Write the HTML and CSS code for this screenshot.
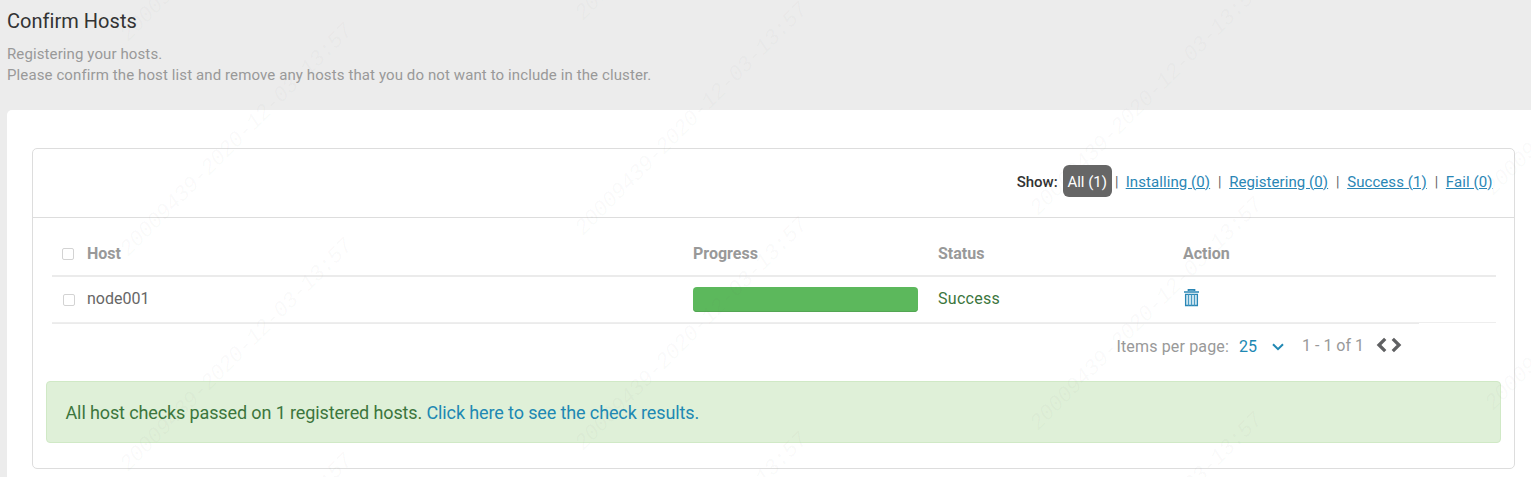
FILE: index.html
```html
<!DOCTYPE html>
<html lang="en">
<head>
<meta charset="utf-8">
<title>Confirm Hosts</title>
<link rel="stylesheet" href="styles.css">
</head>
<body>
<header class="intro">
  <h1 class="title">Confirm Hosts</h1>
  <p class="lead">Registering your hosts.<br>Please confirm the host list and remove any hosts that you do not want to include in the cluster.</p>
</header>
<main class="panel">
  <section class="card">
    <nav class="filters">
      <b class="show">Show:</b><a class="pill">All (1)</a><i class="sep first">|</i><a class="link">Installing (0)</a><i class="sep">|</i><a class="link">Registering (0)</a><i class="sep">|</i><a class="link">Success (1)</a><i class="sep">|</i><a class="link">Fail (0)</a>
    </nav>
    <div class="table">
      <div class="row head">
        <span class="check"></span><span>Host</span><span>Progress</span><span>Status</span><span>Action</span>
      </div>
      <div class="row item">
        <span class="check"></span><span class="host">node001</span><span class="bar"></span><span class="success">Success</span>
        <svg class="trash" width="17" height="18" viewBox="0 0 17 18"><path d="M1 3h15M5.5 2V.8h6V2" fill="none" stroke="#2a86b5" stroke-width="1.7"/><path d="M2.6 5.3h11.8v11.2H2.6z" fill="#d9ebf4" stroke="#2a86b5" stroke-width="1.3"/><path d="M5.5 5.5v11M8.5 5.5v11M11.5 5.5v11" stroke="#4a9cc4" stroke-width="1.2"/></svg>
      </div>
      <div class="line"><span></span></div>
    </div>
    <div class="pager">
      <span class="per">Items per page:</span><span class="num">25</span>
      <svg class="down" width="12" height="8" viewBox="0 0 12 8"><path d="M1 1.2l5 5 5-5" fill="none" stroke="#2088b3" stroke-width="2"/></svg>
      <span class="range">1 - 1 of 1</span>
      <svg class="arrows" width="26" height="16" viewBox="0 0 26 16"><path d="M9.2 1.8L3 8l6.2 6.2M16.8 1.8L23 8l-6.2 6.2" fill="none" stroke="#5f6062" stroke-width="3.3"/></svg>
    </div>
    <div class="alert"><span class="msg">All host checks passed on 1 registered hosts.</span> <a class="results">Click here to see the check results.</a></div>
  </section>
</main>
<svg class="watermark" width="1531" height="477" viewBox="0 0 1531 477">
  <text class="mark" textLength="319" transform="translate(128 42) rotate(-45)">20009439-2020-12-03-13:57</text>
  <text class="mark" textLength="319" transform="translate(128 257) rotate(-45)">20009439-2020-12-03-13:57</text>
  <text class="mark" textLength="319" transform="translate(128 472) rotate(-45)">20009439-2020-12-03-13:57</text>
  <text class="mark" textLength="319" transform="translate(128 687) rotate(-45)">20009439-2020-12-03-13:57</text>
  <text class="mark" textLength="319" transform="translate(583 21) rotate(-45)">20009439-2020-12-03-13:57</text>
  <text class="mark" textLength="319" transform="translate(583 236) rotate(-45)">20009439-2020-12-03-13:57</text>
  <text class="mark" textLength="319" transform="translate(583 451) rotate(-45)">20009439-2020-12-03-13:57</text>
  <text class="mark" textLength="319" transform="translate(583 666) rotate(-45)">20009439-2020-12-03-13:57</text>
  <text class="mark" textLength="319" transform="translate(1038 216) rotate(-45)">20009439-2020-12-03-13:57</text>
  <text class="mark" textLength="319" transform="translate(1038 431) rotate(-45)">20009439-2020-12-03-13:57</text>
  <text class="mark" textLength="319" transform="translate(1038 646) rotate(-45)">20009439-2020-12-03-13:57</text>
  <text class="mark" textLength="319" transform="translate(1493 196) rotate(-45)">20009439-2020-12-03-13:57</text>
  <text class="mark" textLength="319" transform="translate(1493 411) rotate(-45)">20009439-2020-12-03-13:57</text>
</svg>
</body>
</html>
```
FILE: styles.css
```css
* { box-sizing: border-box; }
body {
  margin: 0;
  height: 477px;
  overflow: hidden;
  background: #ececec;
  font-family: Roboto, "Liberation Sans", sans-serif;
  color: #666;
}
.intro { height: 110px; padding: 9px 7px 0; }
.title { margin: 0; font-size: 20px; line-height: 24px; font-weight: 400; color: #333; letter-spacing: .03px; }
.lead { margin: 11px 0 0; font-size: 15px; line-height: 21px; color: #999; letter-spacing: .108px; }
.panel {
  height: 367px;
  margin-left: 7px;
  padding: 38px 16px 0 25px;
  background: #fff;
  border-top-left-radius: 5px;
}
.card { height: 321px; border: 1px solid #ddd; border-radius: 5px; }
.filters {
  display: flex;
  align-items: center;
  justify-content: flex-end;
  height: 69px;
  padding: 0 21.5px 3px 0;
  border-bottom: 1px solid #ddd;
  font-size: 15px;
  white-space: nowrap;
}
.show { margin-right: 5px; font-weight: 500; color: #333; }
.pill { width: 49px; height: 32px; margin-top: -1px; line-height: 34px; text-align: center; border-radius: 6px; background: #666; color: #fff; }
.link { color: #2a86b5; text-decoration: underline; text-underline-offset: 1px; letter-spacing: .08px; }
.sep { width: 19px; text-align: center; font-style: normal; font-size: 14px; }
.sep.first { width: 14px; padding-right: 4px; }
.table { margin: 0 18px 0 19px; }
.row { display: grid; grid-template-columns: 35px 606px 245px 245px 1fr; align-items: center; font-size: 16px; }
.head { height: 59px; padding-top: 13px; border-bottom: 2px solid #ebebeb; font-weight: 700; color: #999; }
.item { height: 45px; padding-bottom: 2px; }
.check { width: 12px; height: 12px; margin: 1px 0 0 10px; border: 1px solid #d3d3d3; border-radius: 2px; background: #fff; }
.item .check { margin: 2px 0 0 11px; }
.bar { width: 225px; height: 25px; margin-top: 1px; border-radius: 4px; background: #5cb85c; box-shadow: inset 0 -1px 0 #53a653; }
.success { color: #3c763d; letter-spacing: .3px; }
.trash { margin-bottom: 1px; }
.line { border-top: 1px solid #eee; height: 2px; }
.line span { display: block; width: 1367px; height: 1px; background: #ebebeb; }
.pager { display: flex; align-items: center; justify-content: flex-end; height: 44px; padding-right: 112px; font-size: 16px; color: #999; }
.per { letter-spacing: .16px; }
.num { margin-left: 10px; color: #2088b3; }
.down { margin: 1px 18px 0 15px; }
.range { margin-top: -2px; }
.arrows { margin: -2px 0 0 12px; }
.alert {
  height: 62px;
  margin: 13px 13px 0;
  padding-left: 18.5px;
  line-height: 61px;
  border: 1px solid #d0e9c6;
  border-radius: 4px;
  background: #dff0d8;
  font-size: 18px;
  letter-spacing: -.12px;
  color: #3c763d;
}
.results { color: #2088b3; }
.watermark { position: absolute; left: 0; top: 0; pointer-events: none; }
.mark { font: italic 22px "Liberation Mono", monospace; fill: rgba(110, 110, 110, .038); }
```
